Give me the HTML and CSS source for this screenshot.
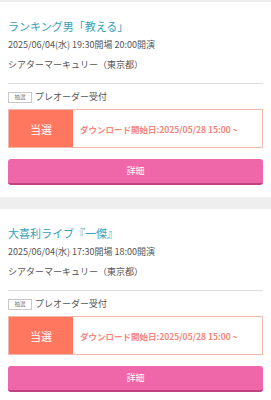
FILE: index.html
```html
<!DOCTYPE html>
<html lang="ja">
<head>
    <meta charset="UTF-8">
    <title>チケット</title>
    <link rel="stylesheet" href="styles.css">
</head>
<body>
<div class="list">
    <div class="card">
        <h2 class="title">ランキング男「教える」</h2>
        <p class="info">2025/06/04(水) 19:30開場 20:00開演</p>
        <p class="info">シアターマーキュリー（東京都）</p>
        <div class="type">
            <span class="badge">抽選</span>
            <span class="type-name">プレオーダー受付</span>
        </div>
        <div class="result">
            <div class="result-label">当選</div>
            <div class="result-text">ダウンロード開始日:2025/05/28 15:00 ~</div>
        </div>
        <a class="btn" href="#">詳細</a>
    </div>
    <div class="card">
        <h2 class="title">大喜利ライブ『一傑』</h2>
        <p class="info">2025/06/04(水) 17:30開場 18:00開演</p>
        <p class="info">シアターマーキュリー（東京都）</p>
        <div class="type">
            <span class="badge">抽選</span>
            <span class="type-name">プレオーダー受付</span>
        </div>
        <div class="result">
            <div class="result-label">当選</div>
            <div class="result-text">ダウンロード開始日:2025/05/28 15:00 ~</div>
        </div>
        <a class="btn" href="#">詳細</a>
    </div>
</div>
</body>
</html>
```

FILE: styles.css
```css
* {
    margin: 0;
    padding: 0;
    box-sizing: border-box;
}

body {
    background-color: #eeeeee;
    font-family: "Noto Sans CJK JP", "Noto Sans", sans-serif;
    color: #555;
}

.list {
    display: flex;
    flex-direction: column;
    gap: 12px;
    padding-top: 2px;
}

.card {
    background-color: #fff;
    padding: 16px 8px 12px;
}

.title {
    font-size: 11px;
    line-height: 16px;
    font-weight: normal;
    color: #3a9fb6;
    margin-bottom: 1px;
}

.info {
    font-size: 9px;
    line-height: 20px;
}

.info + .info {
    margin-bottom: 8px;
}

.type {
    border-top: 1px solid #dcdcdc;
    padding-top: 6px;
    display: flex;
    align-items: center;
    gap: 3px;
    height: 21px;
}

.badge {
    display: inline-block;
    width: 24px;
    height: 11px;
    border: 1px solid #c8c8c8;
    font-size: 5.5px;
    line-height: 9px;
    text-align: center;
    color: #777;
}

.type-name {
    font-size: 9px;
    line-height: 14px;
    color: #555;
}

.result {
    display: flex;
    height: 39px;
    margin-top: 5px;
    border: 1px solid #f2b6ab;
}

.result-label {
    width: 64px;
    background-color: #ff775e;
    color: #fff;
    font-size: 11px;
    display: flex;
    align-items: center;
    justify-content: center;
}

.result-text {
    flex: 1;
    display: flex;
    align-items: center;
    padding-left: 7px;
    font-size: 8.5px;
    font-weight: bold;
    color: #f3877a;
}

.btn {
    display: block;
    margin-top: 11px;
    height: 26px;
    background-color: #ef67a8;
    border-bottom: 2px solid #c2427f;
    border-radius: 3px;
    color: #fff;
    font-size: 9px;
    line-height: 24px;
    text-align: center;
    text-decoration: none;
}
```
